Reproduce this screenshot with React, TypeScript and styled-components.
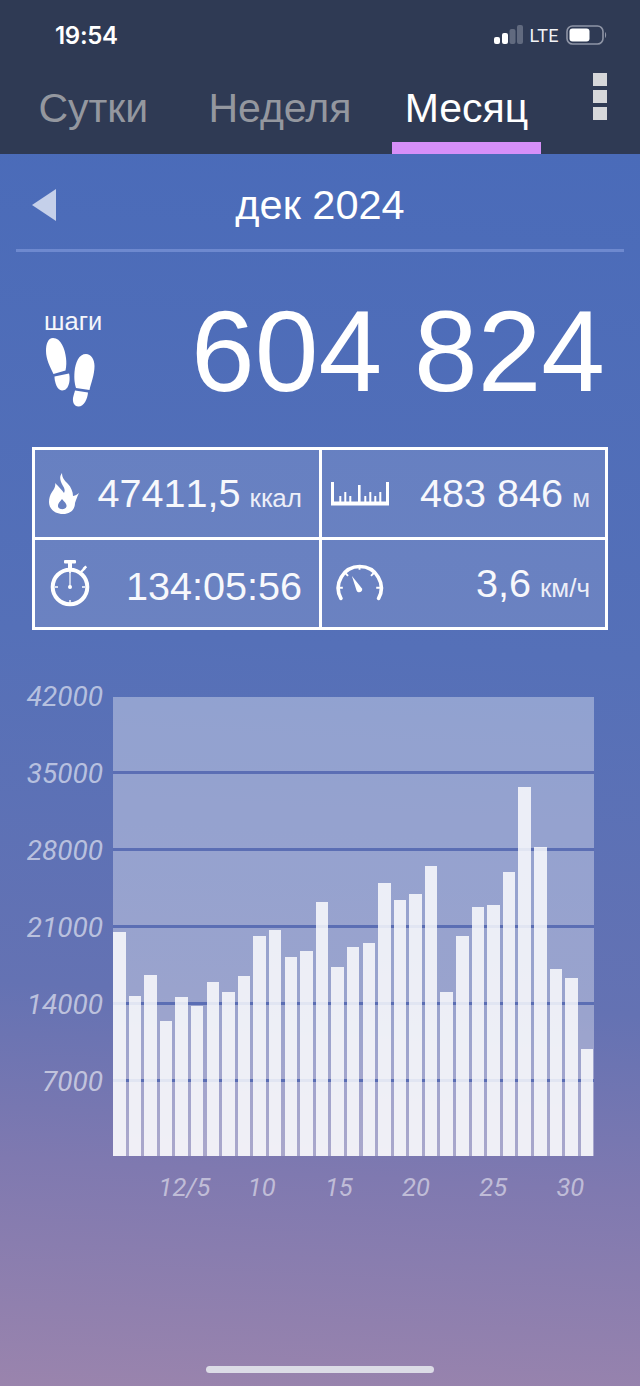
import React from "react";
import styled, { createGlobalStyle } from "styled-components";

const Global = createGlobalStyle`
  html, body { margin: 0; padding: 0; background: #2f3a54; }
  body { font-family: "Liberation Sans", Arial, sans-serif; }
  * { box-sizing: border-box; }
`;

const Page = styled.div`
  width: 640px;
  height: 1386px;
  display: flex;
  flex-direction: column;
  overflow: hidden;
  color: #fff;
`;

const Header = styled.header`
  height: 154px;
  flex: none;
  background: #2f3a54;
  display: flex;
  flex-direction: column;
`;

const StatusBar = styled.div`
  height: 70px;
  padding: 0 33px 0 55px;
  display: flex;
  align-items: center;
  justify-content: space-between;
`;

const Time = styled.span`
  font-family: Inter, sans-serif;
  font-weight: 600;
  font-size: 24px;
  letter-spacing: -0.3px;
`;

const StatusRight = styled.div`
  display: flex;
  align-items: center;
  gap: 7px;
`;

const Lte = styled.span`
  font-family: Roboto, sans-serif;
  font-size: 18px;
  font-weight: 400;
  color: #f2f3f6;
  letter-spacing: 0.4px;
`;

const TabRow = styled.nav`
  flex: 1;
  display: flex;
  align-items: stretch;
  position: relative;
`;

const Tab = styled.div<{ $active?: boolean }>`
  width: 186.6px;
  position: relative;
  text-align: center;
  font-size: 41px;
  line-height: 48px;
  padding-top: 14px;
  color: ${(p) => (p.$active ? "#ffffff" : "#94979f")};
  &::after {
    content: "";
    display: ${(p) => (p.$active ? "block" : "none")};
    position: absolute;
    left: 19px;
    bottom: 0;
    width: 149px;
    height: 12px;
    background: #d68ff8;
  }
`;

const MenuDots = styled.div`
  position: absolute;
  right: 33px;
  top: 3px;
  display: flex;
  flex-direction: column;
  gap: 4px;
`;

const MenuDot = styled.span`
  width: 14px;
  height: 13px;
  background: #d6d7da;
`;

const Body = styled.main`
  flex: 1;
  display: flex;
  flex-direction: column;
  background: linear-gradient(
    183deg,
    #4a6bb9 0%,
    #5570b8 40%,
    #6472b3 68%,
    #7f79b0 82%,
    #9a84ad 100%
  );
`;

const DateRow = styled.div`
  height: 95px;
  padding: 7px 32px 0;
  display: grid;
  grid-template-columns: 1fr auto 1fr;
  align-items: center;
`;

const DateText = styled.div`
  font-size: 41.5px;
  line-height: 48px;
`;

const Divider = styled.div`
  height: 3px;
  margin: 0 16px;
  background: #6e89cf;
`;

const StepsRow = styled.section`
  height: 195px;
  padding: 57px 35px 0 44px;
  display: flex;
  justify-content: space-between;
  align-items: flex-start;
`;

const StepsLabel = styled.div`
  display: flex;
  flex-direction: column;
  font-size: 25.5px;
  line-height: 24px;
  color: #f5f6fb;
`;

const FeetIcon = styled.svg`
  display: block;
  margin: 4px 0 0 2px;
`;

const StepsValue = styled.div`
  font-size: 114.5px;
  line-height: 116px;
  margin-top: -16px;
  white-space: nowrap;
  font-kerning: none;
`;

const Stats = styled.section`
  margin: 0 32px;
  height: 183px;
  border: 3px solid #fff;
  display: grid;
  grid-template-columns: 287px 1fr;
  grid-template-rows: 90px 1fr;
  background: rgba(255, 255, 255, 0.13);
`;

const Cell = styled.div<{ $right?: boolean; $bottom?: boolean }>`
  display: flex;
  align-items: center;
  justify-content: space-between;
  padding: 0 ${(p) => (p.$right ? "15px" : "17px")} 0 ${(p) => (p.$right ? "9px" : "14px")};
  ${(p) => (p.$right ? "" : "border-right: 3px solid #fff;")}
  ${(p) => (p.$bottom ? "" : "border-bottom: 3px solid #fff;")}
`;

const Value = styled.div`
  font-size: 39.6px;
  line-height: 46px;
  padding-top: 4px;
  white-space: nowrap;
  color: #f7f8fc;
  font-kerning: none;
`;

const Unit = styled.span`
  font-size: 26px;
  margin-left: 9px;
  color: #eceef8;
`;

const Chart = styled.section`
  margin-top: 67px;
  display: grid;
  grid-template-columns: 113px 480.5px;
  grid-template-rows: 459px auto;
`;

const YAxis = styled.div`
  margin-top: -39px;
  display: flex;
  flex-direction: column;
`;

const AxisLabel = styled.div`
  font-family: Roboto, "Liberation Sans", sans-serif;
  font-style: italic;
  font-weight: 400;
  font-size: 28px;
  color: rgba(255, 255, 255, 0.58);
`;

const YLabel = styled(AxisLabel)`
  height: 77px;
  line-height: 77px;
  text-align: right;
  padding-right: 10px;
`;

const Plot = styled.div`
  position: relative;
  background: rgba(255, 255, 255, 0.35);
  display: flex;
  flex-direction: column;
`;

const GridRow = styled.div`
  height: 77px;
  flex: none;
  border-bottom: 3px solid #5b6eb4;
  &:nth-child(6) {
    height: 74px;
    border-bottom: none;
  }
`;

const Bars = styled.div`
  position: absolute;
  inset: 0;
  display: grid;
  grid-template-columns: repeat(31, 12.5px);
  justify-content: space-between;
  align-items: end;
`;

const Bar = styled.div`
  background: rgba(255, 255, 255, 0.82);
`;

const XAxis = styled.div`
  grid-column: 2;
  margin: 16px 0 0 2px;
  display: grid;
  grid-template-columns: repeat(31, minmax(0, 1fr));
`;

const XLabel = styled(AxisLabel)<{ $day: number }>`
  grid-column: ${(p) => p.$day};
  justify-self: center;
  font-size: 25.5px;
  line-height: 30px;
  white-space: nowrap;
  color: rgba(255, 255, 255, 0.52);
`;

const HomeBar = styled.div`
  width: 228px;
  height: 7px;
  border-radius: 4px;
  margin: auto auto 13px;
  background: #dcdce6;
`;

const tops = [
  932, 996, 975, 1021, 997, 1006, 982, 992, 976, 936, 930, 957, 951, 902, 967, 947,
  943, 883, 900, 894, 866, 992, 936, 907, 905, 872, 787, 847, 969, 978, 1049,
];
const BASE = 1156;

const Signal = () => (
  <svg width="30" height="20" viewBox="0 0 30 20">
    <rect x="1" y="12" width="6" height="7" rx="2" fill="#fff" />
    <rect x="9" y="8" width="6" height="11" rx="2" fill="#fff" />
    <rect x="16.5" y="4" width="6" height="15" rx="2" fill="#616a7f" />
    <rect x="24" y="0" width="6" height="19" rx="2" fill="#616a7f" />
  </svg>
);

const Battery = () => (
  <svg width="41" height="20" viewBox="0 0 41 20">
    <rect x="1" y="1" width="36" height="18" rx="5.5" fill="none" stroke="#8f95a6" strokeWidth="1.6" />
    <rect x="3.5" y="3.5" width="20" height="13" rx="3" fill="#fff" />
    <path d="M39 7 C40.5 8 40.5 12 39 13 Z" fill="#8f95a6" />
  </svg>
);

const BackArrow = () => (
  <svg width="24" height="32" viewBox="0 0 24 32">
    <path d="M24 0 V32 L0 16 Z" fill="#c5d0ea" />
  </svg>
);

const Feet = () => (
  <FeetIcon width="50" height="70" viewBox="0 0 50 70">
    <path d="M7 1 C2 1 0 7 0 14 C0 22 4 30 7.5 37 L19.5 33.5 C20.5 29 20.5 25 20 21 C19 12 15 1 7 1 Z" fill="#fff" />
    <path d="M8.5 39.5 L23 36.5 C24.5 42 23.5 53.5 16 53.5 C11 53.5 8.5 45 8.5 39.5 Z" fill="#fff" />
    <path d="M40 17 C45 17 48.5 22 48.5 29 C48.5 38 45 46 43.5 53 L30 51 C28.5 46 28 42 28.5 35 C29.5 25 33 17 40 17 Z" fill="#fff" />
    <path d="M29 53.5 L42 55.5 C41.5 62 38 69.5 32.5 69.5 C28 69.5 26.5 65 27 61 C27.5 58 28.5 56 29 53.5 Z" fill="#fff" />
  </FeetIcon>
);

const Flame = () => (
  <svg width="30" height="42" viewBox="0 0 30 42">
    <path
      fillRule="evenodd"
      fill="#fff"
      d="M13 0 C10 4 11 8 14 13 C16 16 16 18 15 20 C13 17 10 14 6 10 C7 13 5 16 3 19 C1 22 0 25 0 29 C0 36 6 41 14 41 C22 41 26 36 26 30 C27 27 28 24 30 20 C28 22 25 23 24 23 C24 19 22 14 19 11 C16 8 13 5 13 0 Z M13 26 C10.5 29 8.5 31 9 33.5 C9.8 37 16.5 37 17.5 33.5 C18 31 15.5 29 13 26 Z"
    />
  </svg>
);

const Stopwatch = () => (
  <svg width="42" height="50" viewBox="8 5 42 50">
    <g fill="none" stroke="#fff">
      <circle cx="29" cy="33" r="17.3" strokeWidth="4" />
      <path d="M29 18 V32" strokeWidth="1.2" />
      <path d="M29 46 V49 M14 33 H17 M41 33 H44 M29 17 V19" strokeWidth="1.4" />
      <path d="M40 18 L44 14" strokeWidth="2.4" />
    </g>
    <circle cx="29" cy="33" r="2" fill="#fff" />
    <rect x="23" y="6" width="12" height="3.5" rx="1" fill="#fff" />
    <rect x="27" y="9" width="4" height="6" fill="#fff" />
    <rect x="42" y="12.5" width="4" height="2.5" transform="rotate(-45 44 14)" fill="#fff" />
  </svg>
);

const Ruler = () => (
  <svg width="58" height="24" viewBox="0 0 58 24">
    <g fill="#fff">
      <rect x="0" y="19.5" width="58" height="4" />
      <rect x="0" y="0" width="3" height="21" />
      <rect x="55" y="0" width="3" height="21" />
      <rect x="27" y="3" width="2.6" height="18" />
    </g>
    <path
      d="M9.3 14 V20 M14.3 10 V20 M19.3 14 V20 M34.3 14 V20 M39.3 10 V20 M44.3 14 V20 M49.3 10 V20"
      stroke="#fff"
      strokeWidth="2"
    />
  </svg>
);

const GaugeIcon = styled.svg`
  margin-left: 5px;
`;

const Gauge = () => (
  <GaugeIcon width="48" height="42" viewBox="6 4 50 44">
    <g fill="none" stroke="#fff">
      <path d="M11 41 A22.5 22.5 0 1 1 50.5 41" strokeWidth="3.8" strokeLinecap="round" />
      <path d="M30.5 6 V11 M15 14 L18.5 17.5 M46 14 L42.5 17.5 M8.5 30 H13 M52.5 30 H48" strokeWidth="2" />
    </g>
    <path d="M22.5 17.5 L27.5 33 C29 36 34 34.5 33.3 31 Z" fill="#fff" />
  </GaugeIcon>
);

export default function App() {
  return (
    <Page>
      <Global />
      <Header>
        <StatusBar>
          <Time>19:54</Time>
          <StatusRight>
            <Signal />
            <Lte>LTE</Lte>
            <Battery />
          </StatusRight>
        </StatusBar>
        <TabRow>
          <Tab>Сутки</Tab>
          <Tab>Неделя</Tab>
          <Tab $active>Месяц</Tab>
          <MenuDots>
            <MenuDot />
            <MenuDot />
            <MenuDot />
          </MenuDots>
        </TabRow>
      </Header>
      <Body>
        <DateRow>
          <BackArrow />
          <DateText>дек 2024</DateText>
        </DateRow>
        <Divider />
        <StepsRow>
          <StepsLabel>
            шаги
            <Feet />
          </StepsLabel>
          <StepsValue>604 824</StepsValue>
        </StepsRow>
        <Stats>
          <Cell>
            <Flame />
            <Value>
              47411,5<Unit>ккал</Unit>
            </Value>
          </Cell>
          <Cell $right>
            <Ruler />
            <Value>
              483 846<Unit>м</Unit>
            </Value>
          </Cell>
          <Cell $bottom>
            <Stopwatch />
            <Value>134:05:56</Value>
          </Cell>
          <Cell $right $bottom>
            <Gauge />
            <Value>
              3,6<Unit>км/ч</Unit>
            </Value>
          </Cell>
        </Stats>
        <Chart>
          <YAxis>
            {["42000", "35000", "28000", "21000", "14000", "7000"].map((v) => (
              <YLabel key={v}>{v}</YLabel>
            ))}
          </YAxis>
          <Plot>
            {[0, 1, 2, 3, 4, 5].map((i) => (
              <GridRow key={i} />
            ))}
            <Bars>
              {tops.map((t, i) => (
                <Bar key={i} style={{ height: BASE - t }} />
              ))}
            </Bars>
          </Plot>
          <XAxis>
            <XLabel $day={5}>12/5</XLabel>
            <XLabel $day={10}>10</XLabel>
            <XLabel $day={15}>15</XLabel>
            <XLabel $day={20}>20</XLabel>
            <XLabel $day={25}>25</XLabel>
            <XLabel $day={30}>30</XLabel>
          </XAxis>
        </Chart>
        <HomeBar />
      </Body>
    </Page>
  );
}
